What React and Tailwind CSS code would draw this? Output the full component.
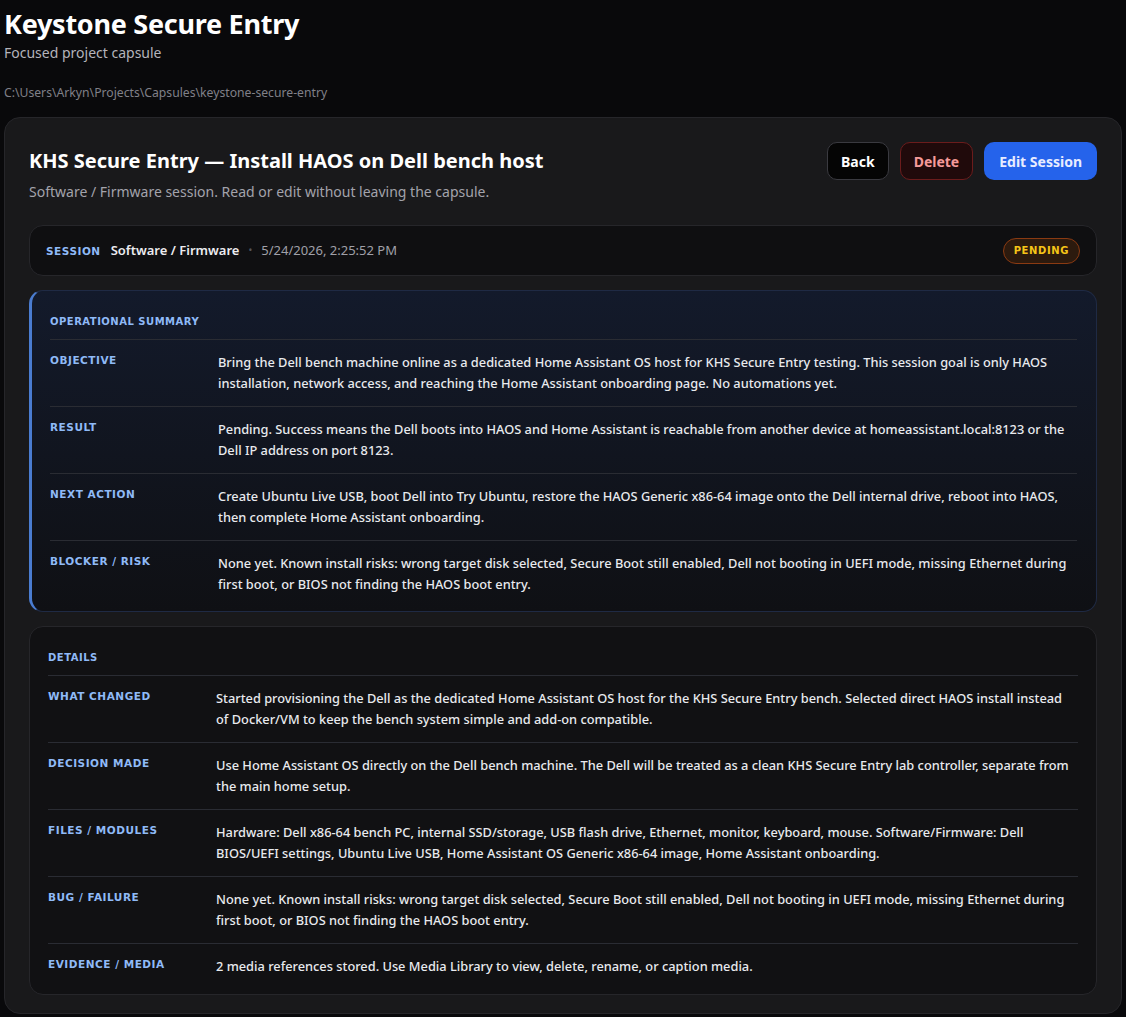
const summary = [
  {
    label: 'Objective',
    value:
      'Bring the Dell bench machine online as a dedicated Home Assistant OS host for KHS Secure Entry testing. This session goal is only HAOS installation, network access, and reaching the Home Assistant onboarding page. No automations yet.',
  },
  {
    label: 'Result',
    value:
      'Pending. Success means the Dell boots into HAOS and Home Assistant is reachable from another device at homeassistant.local:8123 or the Dell IP address on port 8123.',
  },
  {
    label: 'Next Action',
    value:
      'Create Ubuntu Live USB, boot Dell into Try Ubuntu, restore the HAOS Generic x86-64 image onto the Dell internal drive, reboot into HAOS, then complete Home Assistant onboarding.',
  },
  {
    label: 'Blocker / Risk',
    value:
      'None yet. Known install risks: wrong target disk selected, Secure Boot still enabled, Dell not booting in UEFI mode, missing Ethernet during first boot, or BIOS not finding the HAOS boot entry.',
  },
]

const details = [
  {
    label: 'What Changed',
    value:
      'Started provisioning the Dell as the dedicated Home Assistant OS host for the KHS Secure Entry bench. Selected direct HAOS install instead of Docker/VM to keep the bench system simple and add-on compatible.',
  },
  {
    label: 'Decision Made',
    value:
      'Use Home Assistant OS directly on the Dell bench machine. The Dell will be treated as a clean KHS Secure Entry lab controller, separate from the main home setup.',
  },
  {
    label: 'Files / Modules',
    value:
      'Hardware: Dell x86-64 bench PC, internal SSD/storage, USB flash drive, Ethernet, monitor, keyboard, mouse. Software/Firmware: Dell BIOS/UEFI settings, Ubuntu Live USB, Home Assistant OS Generic x86-64 image, Home Assistant onboarding.',
  },
  {
    label: 'Bug / Failure',
    value:
      'None yet. Known install risks: wrong target disk selected, Secure Boot still enabled, Dell not booting in UEFI mode, missing Ethernet during first boot, or BIOS not finding the HAOS boot entry.',
  },
  {
    label: 'Evidence / Media',
    value: '2 media references stored. Use Media Library to view, delete, rename, or caption media.',
  },
]

const labelCls =
  "font-['DejaVu_Sans',sans-serif] font-bold uppercase text-[10.5px] leading-[14px] tracking-[0.05em] text-[#8fbaf7]"

function FieldRow({ label, value }) {
  return (
    <div className="grid grid-cols-[168px_1fr] border-t border-[#2a2c33] pt-[12px] pb-[12px]">
      <div className={`${labelCls} pt-[1px]`}>{label}</div>
      <p className="pr-[4px] text-[12.8px] leading-[21px] font-medium text-[#e8eaee]">{value}</p>
    </div>
  )
}

export default function App() {
  return (
    <div className="min-h-screen bg-[#09090b] font-['Noto_Sans',sans-serif] text-white px-[4px] pt-[6px] pb-[4px]">
      <h1 className="text-[27px] leading-[36px] font-bold tracking-[-0.01em] text-white">Keystone Secure Entry</h1>
      <p className="mt-[1px] text-[14px] leading-[20px] text-[#b4b4bb]">Focused project capsule</p>
      <p className="mt-[22px] text-[12.2px] leading-[16px] text-[#808088]">
        C:\Users\Arkyn\Projects\Capsules\keystone-secure-entry
      </p>

      <div className="mt-[16px] rounded-[16px] border border-[#26262a] bg-[#19191b] px-[24px] pt-[24px] pb-[18px]">
        <div className="flex items-start justify-between">
          <div>
            <h2 className="mt-[5px] text-[20px] leading-[28px] font-bold text-white">
              KHS Secure Entry — Install HAOS on Dell bench host
            </h2>
            <p className="mt-[7px] text-[14px] leading-[20px] text-[#a3a3ab]">
              Software / Firmware session. Read or edit without leaving the capsule.
            </p>
          </div>
          <div className="flex gap-[11px]">
            <button className="h-[38px] px-[13px] rounded-[10px] border border-[#3a3a40] bg-[#050505] text-[14px] font-bold text-white">
              Back
            </button>
            <button className="h-[38px] px-[13px] rounded-[10px] border border-[#6b1c1c] bg-[#200a0b] text-[14px] font-bold text-[#f59a9a]">
              Delete
            </button>
            <button className="h-[38px] px-[15px] rounded-[10px] bg-[#2563eb] text-[14px] font-bold text-[#e8ecff]">
              Edit Session
            </button>
          </div>
        </div>

        <div className="mt-[23px] flex items-center justify-between rounded-[14px] border border-[#26262a] bg-[#0f0f11] h-[51px] pl-[16px] pr-[16px]">
          <div className="flex items-center">
            <span className={`${labelCls} text-[9px]`}>Session</span>
            <span className="ml-[10px] text-[13px] font-semibold text-[#ececf0]">Software / Firmware</span>
            <span className="mx-[9px] text-[10px] text-[#55555c]">•</span>
            <span className="text-[13px] text-[#a0a0a8]">5/24/2026, 2:25:52 PM</span>
          </div>
          <span className="rounded-full border border-[#8a3a12] bg-[#2c1a0e] px-[10px] h-[26px] flex items-center font-['DejaVu_Sans',sans-serif] font-bold text-[10px] tracking-[0.06em] text-[#f5c518]">
            PENDING
          </span>
        </div>

        <div className="mt-[14px] rounded-[14px] border border-[#1f2a44] border-l-[3px] border-l-[#4a7cd0] bg-gradient-to-b from-[#131a2b] to-[#0f1014] pl-[18px] pr-[19px] pt-[24px] pb-[4px]">
          <div className={`${labelCls} text-[10px] pb-[10px]`}>Operational Summary</div>
          {summary.map((r) => (
            <FieldRow key={r.label} {...r} />
          ))}
        </div>

        <div className="mt-[14px] rounded-[14px] border border-[#26262a] bg-[#111113] px-[18px] pt-[24px] pb-[5px]">
          <div className={`${labelCls} text-[10px] pb-[10px]`}>Details</div>
          {details.map((r) => (
            <FieldRow key={r.label} {...r} />
          ))}
        </div>
      </div>
    </div>
  )
}
